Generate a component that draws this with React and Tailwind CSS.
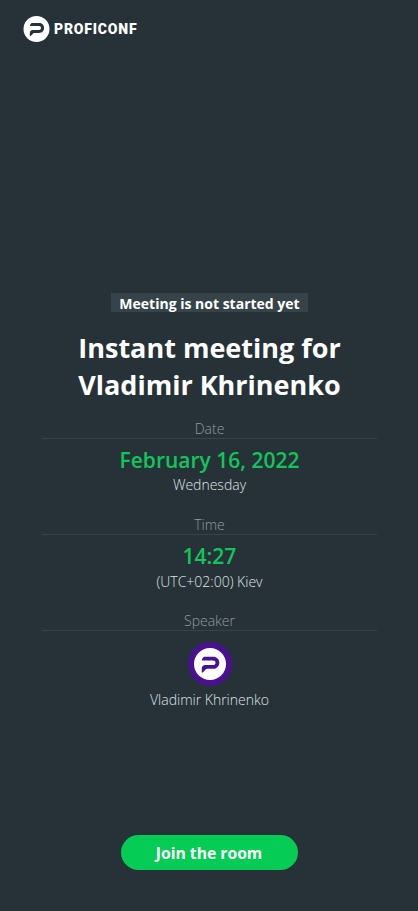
import React from 'react';

function Mark({ className }) {
  return (
    <svg viewBox="0 0 32 32" className={className}>
      <circle cx="16" cy="16" r="16" fill="#fff" />
      <path
        d="M10.6 8.7H19C22.8 8.7 25.3 11.2 25.3 14.7S22.8 20.8 19 20.8H13.4C11 20.8 10.6 24.2 7.8 24.8V20.6C7.8 18.4 9.2 17.1 11.2 17.1H19C20.6 17.1 21.5 16.1 21.5 14.7S20.6 12.4 19 12.4H7.8C8 10.4 9 9 10.6 8.7Z"
        fill="currentColor"
      />
    </svg>
  );
}

function Section({ label, className, children }) {
  return (
    <section className={`flex flex-col items-center ${className}`}>
      <h2 className="h-[19px] w-full border-b border-[#364349] text-center text-[14px] leading-[18px] font-light text-[#929a9f]">
        {label}
      </h2>
      {children}
    </section>
  );
}

export default function App() {
  return (
    <div className="flex h-[911px] w-full flex-col bg-[#273238] font-['Open_Sans',sans-serif] text-white">
      <header className="flex items-center gap-[4px] pt-4 pl-[23px]">
        <Mark className="h-[26px] w-[27px] text-[#273238]" />
        <span className="font-[Roboto,sans-serif] text-[14px] leading-[26px] font-black tracking-[0.8px]">PROFICONF</span>
      </header>

      <main className="mt-[251px] flex flex-col pr-[41px] pl-[42px]">
        <p className="h-[19px] w-[197px] self-center bg-[#36444a] text-center text-[14px] leading-[21px] font-bold whitespace-nowrap">
          Meeting is not started yet
        </p>
        <h1 className="mt-[17px] text-center text-[27px] leading-[37px] font-bold">
          Instant meeting for
          <br />
          Vladimir Khrinenko
        </h1>

        <Section label="Date" className="mt-[17px]">
          <p className="mt-[7px] text-[21px] leading-[29px] font-semibold text-[#10c65b]">February 16, 2022</p>
          <p className="text-[14px] leading-[19px] font-light text-[#dfe3e5]">Wednesday</p>
        </Section>

        <Section label="Time" className="mt-[22px]">
          <p className="mt-[7px] text-[21px] leading-[29px] font-semibold text-[#10c65b]">14:27</p>
          <p className="mt-[1px] text-[14px] leading-[19px] font-light text-[#dfe3e5]">(UTC+02:00) Kiev</p>
        </Section>

        <Section label="Speaker" className="mt-[21px]">
          <div className="mt-[11px] flex size-11 items-center justify-center rounded-full bg-[#491090]">
            <Mark className="size-8 text-[#491090]" />
          </div>
          <p className="mt-[4px] text-[14px] leading-[19px] font-light text-[#dfe3e5]">Vladimir Khrinenko</p>
        </Section>
      </main>

      <button className="mt-auto mb-[41px] h-[35px] w-[177px] self-center rounded-full bg-[#04cc55] text-[15.7px] leading-[36px] font-bold">
        Join the room
      </button>
    </div>
  );
}
